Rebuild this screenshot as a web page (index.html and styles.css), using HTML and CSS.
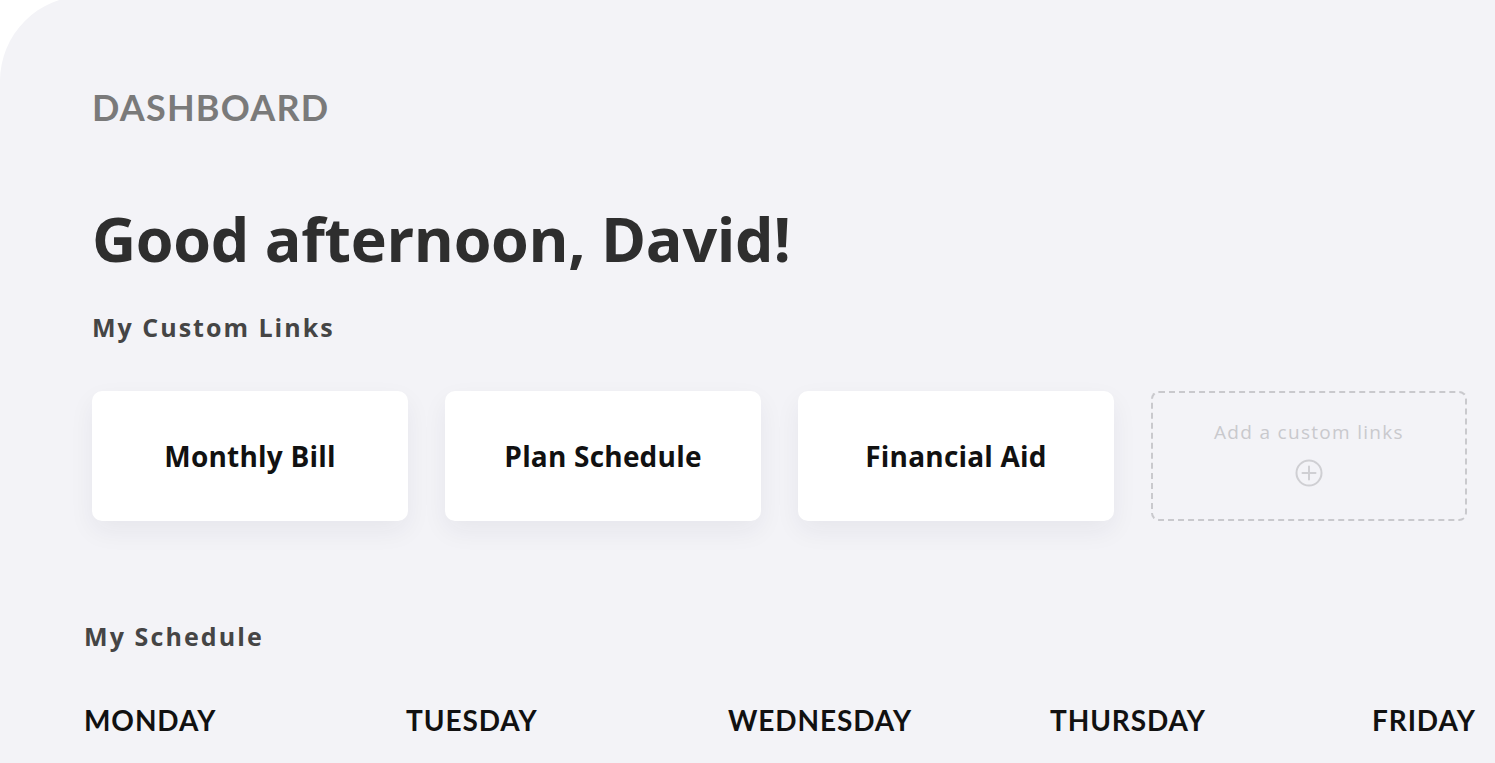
FILE: index.html
```html
<!DOCTYPE html>
<html lang="en">
<head>
<meta charset="utf-8">
<title>Dashboard</title>
<link rel="stylesheet" href="styles.css">
</head>
<body>
<main class="panel">
  <section class="intro">
    <div class="eyebrow">DASHBOARD</div>
    <h1 class="greeting">Good afternoon, David!</h1>
    <h2 class="section-title">My Custom Links</h2>
    <div class="links">
      <a class="link-card">Monthly Bill</a>
      <a class="link-card">Plan Schedule</a>
      <a class="link-card">Financial Aid</a>
      <div class="add-card">
        <span class="add-label">Add a custom links</span>
        <svg class="add-icon" width="28" height="28" viewBox="0 0 28 28" aria-hidden="true">
          <circle cx="14" cy="14" r="12.5" fill="none" stroke="#cfcfd3" stroke-width="2"/>
          <path d="M14 7.5v13M7.5 14h13" stroke="#cfcfd3" stroke-width="2" stroke-linecap="round"/>
        </svg>
      </div>
    </div>
  </section>
  <section class="schedule">
    <h2 class="section-title">My Schedule</h2>
    <div class="days">
      <div class="day">MONDAY</div>
      <div class="day">TUESDAY</div>
      <div class="day">WEDNESDAY</div>
      <div class="day">THURSDAY</div>
      <div class="day">FRIDAY</div>
    </div>
  </section>
</main>
</body>
</html>
```
FILE: styles.css
```css
html, body {
  margin: 0;
  padding: 0;
  background: #ffffff;
  overflow: hidden;
  height: 763px;
}

body {
  font-family: Lato, "Open Sans", "Liberation Sans", sans-serif;
}

.panel {
  margin-top: -4px;
  min-height: 800px;
  background: #f3f3f7;
  border-top-left-radius: 85px;
  padding: 93px 0 0 84px;
  box-sizing: border-box;
  overflow: hidden;
}

.intro {
  padding-left: 8px;
}

.eyebrow {
  font-size: 36px;
  line-height: 36px;
  font-weight: 700;
  color: #7a7a7a;
  letter-spacing: 1.2px;
}

.greeting {
  margin: 83px 0 0;
  font-family: "Open Sans", Lato, sans-serif;
  font-size: 61px;
  line-height: 61px;
  font-weight: 700;
  color: #2e2e2e;
  letter-spacing: -0.3px;
}

.section-title {
  margin: 46px 0 0;
  font-family: "Open Sans", Lato, sans-serif;
  font-size: 25px;
  line-height: 25px;
  font-weight: 700;
  color: #454545;
  letter-spacing: 2px;
}

.links {
  display: flex;
  gap: 37px;
  margin-top: 51px;
}

.link-card {
  width: 316px;
  height: 130px;
  flex: none;
  display: flex;
  align-items: center;
  justify-content: center;
  background: #ffffff;
  border-radius: 10px;
  box-shadow: 0 10px 26px rgba(40, 40, 70, 0.06);
  font-family: "Open Sans", Lato, sans-serif;
  font-size: 28px;
  font-weight: 700;
  color: #111111;
  letter-spacing: 0.2px;
}

.add-card {
  width: 316px;
  height: 130px;
  flex: none;
  box-sizing: border-box;
  border: 2px dashed #c9c9cd;
  border-radius: 8px;
  display: flex;
  flex-direction: column;
  align-items: center;
  padding-top: 28px;
  gap: 16px;
}

.add-label {
  font-family: "Open Sans", Lato, sans-serif;
  font-size: 19px;
  line-height: 22px;
  color: #c9c9cd;
  letter-spacing: 1.3px;
}

.add-icon {
  display: block;
}

.schedule .section-title {
  margin-top: 103px;
  letter-spacing: 2.1px;
}

.days {
  display: grid;
  grid-template-columns: repeat(5, 322px);
  margin-top: 57px;
}

.day {
  font-size: 28px;
  line-height: 28px;
  font-weight: 700;
  color: #111111;
  letter-spacing: 0.9px;
}
```
